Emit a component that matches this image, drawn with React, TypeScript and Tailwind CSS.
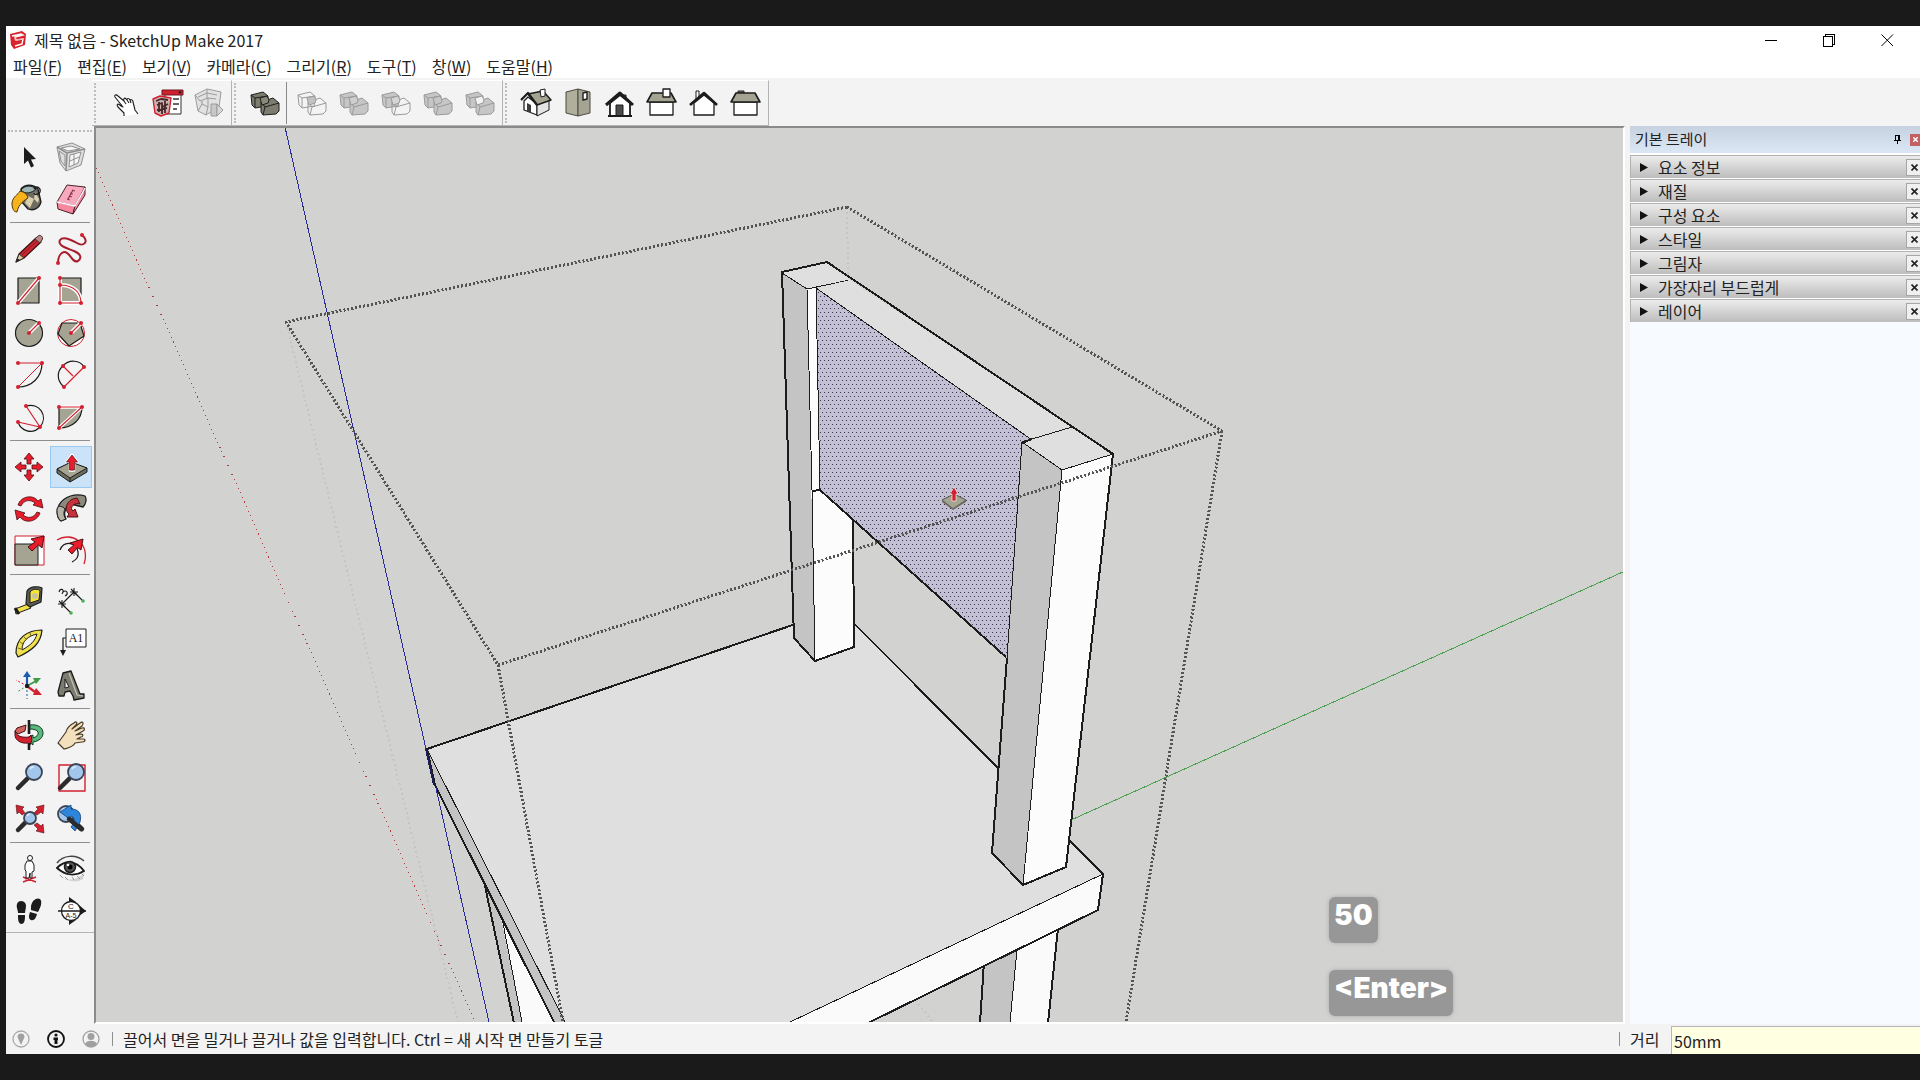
import { ReactNode, useState } from 'react'

const RED = '#d2202f'
const STONE = '#a5a492'
const INK = '#1c1c1c'

const menus = [
  { label: '파일', mnemonic: 'F' },
  { label: '편집', mnemonic: 'E' },
  { label: '보기', mnemonic: 'V' },
  { label: '카메라', mnemonic: 'C' },
  { label: '그리기', mnemonic: 'R' },
  { label: '도구', mnemonic: 'T' },
  { label: '창', mnemonic: 'W' },
  { label: '도움말', mnemonic: 'H' },
]

const trayPanels = ['요소 정보', '재질', '구성 요소', '스타일', '그림자', '가장자리 부드럽게', '레이어']

function Icon({ children }: { children: ReactNode }) {
  return (
    <svg width="32" height="32" viewBox="0 0 32 32" fill="none" strokeLinejoin="round" className="overflow-visible" aria-hidden="true">
      {children}
    </svg>
  )
}

function Dot({ x, y }: { x: number; y: number }) {
  return <circle cx={x} cy={y} r="2" fill={RED} />
}

function Lens({ x, y, r, hx, hy }: { x: number; y: number; r: number; hx: number; hy: number }) {
  const d = Math.hypot(hx - x, hy - y)
  const sx = x + ((hx - x) / d) * (r + 1)
  const sy = y + ((hy - y) / d) * (r + 1)
  return (
    <>
      <path d={`M${sx} ${sy}L${hx} ${hy}`} stroke="#2b2b2b" strokeWidth="4.5" strokeLinecap="round" />
      <circle cx={x} cy={y} r={r} fill="#a3c6ec" stroke="#3a4454" strokeWidth="1.8" />
      <path d={`M${x - r / 2} ${y - r / 3}a${r / 2} ${r / 2} 0 0 1 ${r / 2} -${r / 3}`} stroke="#dcebfa" strokeWidth="1.5" />
    </>
  )
}

// two overlapping blocks shared by the whole solid tools bar
function Solids({ a, b, mid, line }: { a: string; b: string; mid: string; line: string }) {
  return (
    <Icon>
      <g stroke={line} strokeWidth="1">
        <path d="M2 8L14 5L19 9V14L18 19L6 21L3 18Z" fill={a} />
        <path d="M2 8L6 11L19 9M6 11V21" />
        <path d="M12 15L24 11L30 16V24L27 27L14 28L12 25Z" fill={b} />
        <path d="M12 15L16 20L30 16M16 20L14 28" />
        <path d="M11 11L18 9L20 13L19 16L13 18Z" fill={mid} />
      </g>
    </Icon>
  )
}

const icons: Record<string, ReactNode> = {
  hand: (
    <Icon>
      <path d="M15 29L15 26L9 20C7 17 9 16 12 19L14 20L6 10C5 8 7 7 9 9L15 14C14 11 16 10 18 13C18 11 20 11 21 13C22 12 24 13 24 15L26 23L29 27M15 14L17 17M18 13L20 16M21 13L22 16" stroke={INK} strokeWidth="1.1" fill="#fff" />
    </Icon>
  ),
  layout: (
    <Icon>
      <path d="M14 5H30V27H14Z" fill="#fff" stroke="#333" />
      <path d="M11 3H32V8H11Z" fill="#d2202f" stroke="#6d1a20" />
      <path d="M27 4.500L31 4.500L29 7Z" fill={INK} />
      <path d="M22 12H28M22 17H28M22 22H26" stroke="#333" strokeWidth="1.5" />
      <path d="M2 12L9 9L20 11L18 26L10 29L4 26Z" fill="#c9b3b2" stroke={RED} strokeWidth="1.4" />
      <path d="M5 14L10 12L17 13M6 18L11 16V27M11 20L17 17M8 15V25M14 14V26M6 23L16 21" stroke="#4a2529" strokeWidth="1.8" />
    </Icon>
  ),
  styleBuilder: (
    <Icon>
      <g stroke="#9b9b9b">
        <path d="M2 8L14 2L28 5L26 20L13 28L5 24Z" fill="#e2e2e2" />
        <path d="M5 10L14 6L24 8M7 14L15 11L23 12M2 8L7 14M5 24L9 17L15 20L13 28M9 17V14M15 20V11M14 2V11" />
        <path d="M18 17H24V29H18Z" fill="#c8c8c8" />
        <path d="M24 17L30 23L24 29Z" fill="#d8d8d8" />
      </g>
    </Icon>
  ),
  outerShell: <Solids a="#7d7c6e" b="#7d7c6e" mid="#8a897a" line="#1f1f1f" />,
  intersect: <Solids a="none" b="none" mid="#c2c2c2" line="#9a9a9a" />,
  union: <Solids a="#c6c6c6" b="#c6c6c6" mid="#cfcfcf" line="#9a9a9a" />,
  subtract: <Solids a="#c6c6c6" b="none" mid="#d5d5d5" line="#9a9a9a" />,
  trim: <Solids a="#c6c6c6" b="#c6c6c6" mid="#c6c6c6" line="#9a9a9a" />,
  split: <Solids a="#c6c6c6" b="#c6c6c6" mid="#f3f3f3" line="#9a9a9a" />,
  iso: (
    <Icon>
      <path d="M4 14L8 10L17 17V28L4 23Z" fill="#fff" stroke={INK} strokeWidth="1.3" />
      <path d="M17 18L29 13V23L17 29Z" fill="#e4e4e4" stroke={INK} />
      <path d="M7 16L11 18V26L7 24Z" fill="#3c3c3c" />
      <path d="M8 7L23 4L31 13L17 18Z" fill={STONE} stroke={INK} strokeWidth="1.5" />
      <path d="M1 13L8 6L17 18" stroke={INK} strokeWidth="2.2" />
      <path d="M20 3L25 2V9L21 10Z" fill="#fff" stroke={INK} />
    </Icon>
  ),
  top: (
    <Icon>
      <path d="M4 5L16 2V29L4 26Z" fill="#b0af9b" stroke="#4b4b42" />
      <path d="M16 2L28 5V26L16 29Z" fill={STONE} stroke="#4b4b42" />
      <path d="M21 6L25 5V12L21 13Z" fill="#fff" stroke={INK} strokeWidth="1.4" />
    </Icon>
  ),
  front: (
    <Icon>
      <path d="M19 8H22V13H19Z" fill="#777" stroke={INK} />
      <path d="M6 16L16 8L26 16V29H6Z" fill="#fff" stroke={INK} strokeWidth="1.8" />
      <path d="M2 18L16 6L29 18" stroke={INK} strokeWidth="3" />
      <path d="M12 18H19V29H12Z" fill="#4a4a4a" stroke={INK} />
      <path d="M4 29H28" stroke={INK} strokeWidth="2" />
    </Icon>
  ),
  right: (
    <Icon>
      <path d="M4 15H27V28H4Z" fill="#fff" stroke={INK} strokeWidth="1.3" />
      <path d="M6 6H25L30 15H1Z" fill={STONE} stroke={INK} strokeWidth="1.6" />
      <path d="M17 2H24V10H17Z" fill="#fff" stroke={INK} strokeWidth="1.3" />
    </Icon>
  ),
  back: (
    <Icon>
      <path d="M8 4H11V12H8Z" fill="#fff" stroke={INK} />
      <path d="M6 16L16 8L26 16V28H6Z" fill="#fff" stroke={INK} strokeWidth="1.3" />
      <path d="M2 18L16 6L29 18" stroke={INK} strokeWidth="2.600" />
    </Icon>
  ),
  left: (
    <Icon>
      <path d="M8 4H14V6H8Z" fill="#888" stroke={INK} />
      <path d="M4 15H27V28H4Z" fill="#fff" stroke={INK} strokeWidth="1.3" />
      <path d="M6 6H25L30 15H1Z" fill={STONE} stroke={INK} strokeWidth="1.6" />
    </Icon>
  ),
  select: (
    <Icon>
      <path d="M11 6V23L15 19.500L18 26.500L21 25L18 18.500L23 18Z" fill={INK} />
    </Icon>
  ),
  component: (
    <Icon>
      <g stroke="#909090">
        <path d="M2 6L17 2L30 8L26 24L11 30L5 22Z" fill="#dedede" />
        <path d="M2 6L12 12L30 8M12 12L11 30" strokeWidth="1.6" />
        <path d="M6 7L16 5L25 8L13 10ZM15 14L26 11L23 22L14 26Z" fill="#f6f6f6" />
        <path d="M4 10L10 14V25L6 20ZM15 20L24 16M19 13V24" />
      </g>
    </Icon>
  ),
  paint: (
    <Icon>
      <path d="M8 6C12 1 20 1 25 6L28 19C26 26 20 28 15 26L8 18Z" fill="#6e6b60" stroke={INK} strokeWidth="1.3" />
      <path d="M8 7C12 2 19 2 23 6C19 10 12 12 8 7Z" fill="#9fb4b4" stroke={INK} />
      <path d="M15 13L21 16L17 25L12 20ZM22 9L26 16L25 20L21 16Z" fill="#d8cfae" />
      <path d="M7 8C5 12 0 13 -1 20C-1 26 1 29 4 29C5 24 8 19 15 15C14 10 10 9 7 8Z" fill="#f8b31c" stroke="#4d3a0a" />
      <path d="M21 6C24 2 28 5 27 9C26 12 21 12 21 10" stroke={INK} strokeWidth="1.3" />
    </Icon>
  ),
  eraser: (
    <Icon>
      <path d="M12 2L30 4L20 23L2 19Z" fill="#f9a9bd" stroke="#4a2029" />
      <path d="M2 19L20 23L18 31L3 26Z" fill="#f7889f" stroke="#4a2029" />
      <path d="M20 23L30 4V12L18 31Z" fill="#f58ba3" stroke="#4a2029" />
      <path d="M2 19L20 23L30 5" stroke="#fff" strokeWidth="1.3" />
      <path d="M12 16L15 17M14 13L17 14M15 10L18 11M17 7L20 8M13 16L18 7" stroke="#8a3b4c" strokeWidth="1.2" />
    </Icon>
  ),
  line: (
    <Icon>
      <path d="M3 29L6 21L23 5L28 9L11 25Z" fill="#c9252f" stroke="#3c1216" strokeWidth="1.2" />
      <path d="M3 29L6 21L11 25Z" fill="#d8c9a0" stroke="#333" />
      <path d="M3 29L4.500 25.500L7 27Z" fill={INK} />
      <path d="M22 6L25 3C27 1 31 4 29 7L27 10Z" fill="#b88" stroke="#433" />
      <path d="M9 22L24 8" stroke="#8c1820" />
    </Icon>
  ),
  freehand: (
    <Icon>
      <path d="M27 2C35 9 28 14 22 10C15 6 8 3 5 7C2 13 12 15 19 18C26 21 27 25 23 28C17 31 15 18 9 19C5 20 3 25 3 30" stroke="#a81d2a" strokeWidth="2" />
      <Dot x={27} y={2} /><Dot x={3} y={30} />
    </Icon>
  ),
  rectangle: (
    <Icon>
      <path d="M5 3H26V28H5Z" fill={STONE} stroke={INK} strokeWidth="1.2" />
      <path d="M5 28L26 3" stroke="#fff" strokeWidth="4" />
      <path d="M5 28L26 3" stroke={RED} strokeWidth="1.2" />
      <Dot x={5} y={28} /><Dot x={26} y={3} />
    </Icon>
  ),
  rotatedRectangle: (
    <Icon>
      <path d="M5 3H26V28H5Z" fill={STONE} stroke={INK} strokeWidth="1.2" />
      <path d="M5 10C18 10 26 17 26 28M5 3V28H26" stroke="#fff" strokeWidth="4" />
      <path d="M5 10C18 10 26 17 26 28M5 3V28H26" stroke={RED} strokeWidth="1.1" />
      <Dot x={5} y={3} /><Dot x={5} y={10} /><Dot x={5} y={28} /><Dot x={26} y={28} />
    </Icon>
  ),
  circle: (
    <Icon>
      <circle cx="16" cy="16" r="13.500" fill={STONE} stroke={INK} strokeWidth="1.2" />
      <path d="M16 16L26 6" stroke="#fff" strokeWidth="4" />
      <path d="M16 16L26 6" stroke={RED} strokeWidth="1.1" />
      <Dot x={16} y={16} /><Dot x={26} y={6} />
    </Icon>
  ),
  polygon: (
    <Icon>
      <circle cx="16" cy="16" r="13.500" fill="#fff" stroke={RED} />
      <path d="M7 6L25 6L29 19L14 29L3 17Z" fill={STONE} stroke={INK} strokeWidth="1.2" />
      <path d="M16 16L26 6" stroke="#fff" strokeWidth="4" />
      <path d="M16 16L26 6" stroke={RED} strokeWidth="1.1" />
      <Dot x={16} y={16} /><Dot x={26} y={6} />
    </Icon>
  ),
  arc: (
    <Icon>
      <path d="M29 4C29 18 19 28 5 28" stroke={INK} strokeWidth="1.2" />
      <path d="M5 4H29L5 28" stroke={RED} />
      <Dot x={5} y={4} /><Dot x={29} y={4} /><Dot x={5} y={28} />
    </Icon>
  ),
  twoPointArc: (
    <Icon>
      <path d="M9 28C1 21 2 12 8 7C14 0 25 1 29 8" stroke={INK} strokeWidth="1.2" />
      <path d="M8 7L18 17M29 8L9 28" stroke={RED} strokeWidth="1.2" />
      <Dot x={8} y={7} /><Dot x={29} y={8} /><Dot x={9} y={28} />
    </Icon>
  ),
  threePointArc: (
    <Icon>
      <path d="M13 5C26 1 36 15 27 26C19 34 8 30 5 21" stroke={INK} strokeWidth="1.2" />
      <path d="M13 5L27 26L5 21" stroke={RED} strokeWidth="1.2" />
      <Dot x={13} y={5} /><Dot x={27} y={26} /><Dot x={5} y={21} />
    </Icon>
  ),
  pie: (
    <Icon>
      <path d="M4 6H27C27 18 18 27 4 27Z" fill={STONE} stroke={INK} strokeWidth="1.2" />
      <path d="M4 6H27L4 27" stroke="#fff" strokeWidth="3.500" />
      <path d="M4 6H27L4 27" stroke={RED} strokeWidth="1.1" />
      <Dot x={4} y={6} /><Dot x={27} y={6} /><Dot x={4} y={27} />
    </Icon>
  ),
  move: (
    <Icon>
      <g fill="#e81c2b" stroke="#4d1014" strokeWidth=".8">
        <path d="M16 2L21 8H18V13H14V8H11Z" />
        <path d="M16 30L21 24H18V19H14V24H11Z" />
        <path d="M2 16L8 11V14H13V18H8V21Z" />
        <path d="M30 16L24 11V14H19V18H24V21Z" />
      </g>
    </Icon>
  ),
  pushPull: (
    <Icon>
      <path d="M2 18L15 12L32 17V21L15 31L2 22Z" fill="#6d6c5e" stroke={INK} />
      <path d="M2 18L16 11L32 17L15 27Z" fill={STONE} stroke={INK} />
      <path d="M15 27V31" stroke={INK} />
      <path d="M17 3L23 11H19.500V20H14.500V11H11Z" fill="#e81c2b" stroke="#fff" strokeWidth="1.4" />
      <path d="M17 4L22.500 11H19.500V19H14.500V11H11.500Z" fill="#e81c2b" stroke="#5d1418" strokeWidth=".7" />
    </Icon>
  ),
  rotate: (
    <Icon>
      <g fill="#e81c2b" stroke="#4d1014" strokeWidth=".8">
        <path d="M5 12C8 3 20 1 25 8L28 6L30 15L20 12L22 10C17 6 11 7 8 13Z" />
        <path d="M27 20C24 29 12 31 7 24L4 27L2 17L12 20L10 22C15 26 21 25 24 19Z" />
      </g>
    </Icon>
  ),
  followMe: (
    <Icon>
      <path d="M30 3C21 0 9 3 4 12C1 18 2 25 6 28L11 26C8 21 10 14 16 11L28 14C31 11 32 6 30 3Z" fill="#8b8a7d" stroke={INK} strokeWidth="1.3" />
      <path d="M2 16C3 12 8 13 10 16C8 20 9 24 11 26L6 28C2 25 2 20 2 16Z" fill="#b5b4a6" stroke={INK} />
      <path d="M22 5C12 6 8 16 14 21L12 24L23 24L20 16L18 18C14 15 19 9 25 11Z" fill="#c7333b" stroke="#4d1014" />
    </Icon>
  ),
  scale: (
    <Icon>
      <path d="M2 1H31V30H2Z" stroke={RED} fill="#fff" />
      <path d="M2 9H25V30H2Z" fill={STONE} stroke={INK} />
      <path d="M31 1L29 13L25.500 10L19 16L15 12L22 7L18 4Z" fill="#e81c2b" stroke="#4d1014" />
    </Icon>
  ),
  offset: (
    <Icon>
      <path d="M2 5C16 -4 36 8 29 29" stroke={RED} strokeWidth="1.3" />
      <path d="M5 15C9 5 22 7 23 17C24 22 21 25 17 27" stroke={INK} strokeWidth="1.3" />
      <path d="M28 4L26 15L22.500 12.500L17 19L13 15L19 10L15 8Z" fill="#e81c2b" stroke="#4d1014" />
    </Icon>
  ),
  tape: (
    <Icon>
      <path d="M2 24L15 19L18 23L5 28L3 29Z" fill="#f1e14a" stroke={INK} />
      <path d="M2 23L6 29" stroke={INK} strokeWidth="3" />
      <path d="M14 6C17 1 25 1 29 3L28 17L17 22L13 19Z" fill="#5c5b55" stroke={INK} strokeWidth="1.2" />
      <path d="M17 7C20 3 26 4 27 6L26 15L17 18Z" fill="#f4e436" stroke={INK} />
      <circle cx="22" cy="11" r="3" fill="#c9c4a0" />
    </Icon>
  ),
  dimension: (
    <Icon>
      <path d="M7 19L19 7M7 19L16 28M19 7L28 16" stroke={INK} strokeWidth="1.1" />
      <path d="M3 19H11M7 15V23M4 16L10 22M15 7H23M19 3V11M16 4L22 10" stroke={INK} strokeWidth="1.1" />
      <path d="M4 7C5 3 9 4 8 7C12 4 14 9 10 11M8 7L7 9" stroke={INK} strokeWidth="1.1" />
      <circle cx="16" cy="28" r="1.800" fill="#4fb052" /><circle cx="28" cy="16" r="1.800" fill="#4fb052" />
    </Icon>
  ),
  protractor: (
    <Icon>
      <path d="M3 26C3 11 14 3 29 3C28 16 20 23 5 30Z" fill="#efe04c" stroke={INK} strokeWidth="1.2" />
      <path d="M9 23C9 14 15 9 24 7C22 14 18 18 9 23Z" fill="#f4f4f4" stroke={INK} />
      <path d="M5 21L8 22M7 15L10 17M11 10L14 13M17 6L18 9" stroke="#6e6614" />
    </Icon>
  ),
  text: (
    <Icon>
      <path d="M11 2H31V20H11Z" fill="#fff" stroke={INK} />
      <text x="21" y="15" fontSize="12" textAnchor="middle" fill={INK} fontFamily="Liberation Serif, serif">A1</text>
      <path d="M11 11H8V24" stroke={INK} strokeWidth="1.2" />
      <path d="M5 23H11L8 29Z" fill={INK} />
    </Icon>
  ),
  axes: (
    <Icon>
      <path d="M14 17V7" stroke="#1f5bb0" strokeWidth="2.200" /><path d="M10 8L14 2L18 8Z" fill="#1f5bb0" />
      <path d="M14 17L23 12" stroke="#3f9a48" strokeWidth="2" /><path d="M20 9L28 9L23 15Z" fill="#3f9a48" />
      <path d="M14 17L22 23" stroke={RED} strokeWidth="2.200" /><path d="M23 19L29 26L20 26Z" fill={RED} />
      <path d="M14 17V30" stroke="#1f5bb0" strokeDasharray="2 2" />
      <path d="M14 17L4 23" stroke="#3f9a48" strokeDasharray="2 2" />
      <path d="M14 17L3 11" stroke={RED} strokeDasharray="2 2" />
      <circle cx="14" cy="17" r="2.200" fill={INK} />
    </Icon>
  ),
  text3d: (
    <Icon>
      <path d="M8 4L16 2L25 25L29 25V29L19 31L18 27L15 22L10 23L9 27L4 27L3 23Z" fill="#7d7c70" stroke={INK} strokeWidth="1.3" />
      <path d="M10 10L14 18L10 19Z" fill="#f3f3f3" stroke={INK} />
      <path d="M14 4L22 26L28 27" stroke="#c4c3b6" strokeWidth="1.2" />
    </Icon>
  ),
  orbit: (
    <Icon>
      <path d="M16 1V15" stroke={INK} strokeWidth="2.600" />
      <path d="M4 9L13 6L12 12L5 15L2 12Z" fill="#d0635f" stroke="#4d1014" />
      <path d="M17 6C24 5 30 8 30 14C30 19 26 22 20 23V26L13 20L20 16V19C23 18 26 16 25 13C24 11 21 10 17 10Z" fill="#59b97d" stroke="#123d22" />
      <path d="M2 12C3 17 9 19 16 18L18 16L19 21L17 26L15 24C8 25 2 21 2 16Z" fill="#d2202f" stroke="#4d1014" />
      <path d="M16 24V31" stroke={INK} strokeWidth="2.600" />
    </Icon>
  ),
  pan: (
    <Icon>
      <path d="M3 24L11 13C12 9 15 6 19 4C21 2 23 3 21 6L17 10L25 4C28 2 29 4 27 7L20 12L27 9C30 8 30 11 28 12L21 16L26 15C29 15 28 18 26 18L22 20L29 20C31 21 30 23 27 23L20 24C18 28 13 29 9 30Z" fill="#f4e0bd" stroke="#4a3c28" strokeWidth="1.2" />
    </Icon>
  ),
  zoom: <Icon><Lens x={21} y={11} r={8} hx={5} hy={27} /></Icon>,
  zoomWindow: (
    <Icon>
      <path d="M4 4H30V30H4Z" stroke={RED} strokeWidth="1.4" />
      <Lens x={21} y={11} r={8} hx={5} hy={27} />
    </Icon>
  ),
  zoomExtents: (
    <Icon>
      <g fill={RED} stroke="#4d1014" strokeWidth=".6">
        <path d="M3 2L11 4L9 6L12 10L9 12L6 9L4 11Z" />
        <path d="M31 2L23 4L25 6L21 10L24 12L28 9L30 11Z" />
        <path d="M31 30L23 28L25 26L21 22L24 20L28 23L30 21Z" />
      </g>
      <Lens x={17} y={15} r={6} hx={5} hy={27} />
    </Icon>
  ),
  previous: (
    <Icon>
      <Lens x={11} y={11} r={8} hx={27} hy={26} />
      <path d="M5 9L16 2V6C24 6 27 11 25 19L20 28L16 24C20 19 20 14 16 13V17Z" fill="#2e86dc" stroke="#173f70" strokeWidth=".8" />
      <path d="M14 16L26 26" stroke="#2b2b2b" strokeWidth="4.500" strokeLinecap="round" />
    </Icon>
  ),
  positionCamera: (
    <Icon>
      <path d="M10 29L23 24M10 24L23 29M12 26L16 23L20 26" stroke={RED} strokeWidth="1.4" />
      <circle cx="17" cy="5" r="2.500" fill="#fff" stroke={INK} />
      <path d="M14 8H19L21 12L21 18L19 19V25H17V20L16 25H13L13 18L12 17V12Z" fill="#fff" stroke={INK} />
    </Icon>
  ),
  lookAround: (
    <Icon>
      <path d="M3 21C7 27 20 30 29 20L28 26C22 30 10 29 3 21Z" fill="#d3d3d3" />
      <path d="M2 10C8 2 21 1 29 8" stroke="#444" strokeWidth="1.5" />
      <path d="M2 15C9 8 20 6 29 18C21 23 11 23 2 15Z" fill="#fff" stroke={INK} strokeWidth="2" />
      <circle cx="15" cy="14" r="5.500" fill="#555" stroke={INK} strokeWidth="1.500" />
      <circle cx="15" cy="14" r="2.500" fill="#000" /><circle cx="13" cy="12" r="1.300" fill="#fff" />
      <path d="M5 22L8 25M10 24L13 27M17 24L19 27M22 23L25 26M26 20L29 23" stroke="#999" />
    </Icon>
  ),
  walk: (
    <Icon>
      <path d="M4 9C5 5 12 5 13 10C13 14 12 16 12 18L5 18C5 14 3 13 4 9Z" fill={INK} />
      <path d="M5 20L12 20C12 24 12 29 8 29C5 28 5 24 5 20Z" fill={INK} />
      <path d="M18 11C19 5 24 2 27 4C30 7 27 13 25 17L18 15Z" fill={INK} />
      <path d="M17 17L24 19C23 23 21 26 18 25C15 24 16 20 17 17Z" fill={INK} />
    </Icon>
  ),
  section: (
    <Icon>
      <path d="M14 2L21 7L14 11ZM14 30L21 25L14 20ZM24 10L31 16L24 21Z" fill={INK} />
      <circle cx="16" cy="16" r="9.500" fill="#fff" stroke={INK} strokeWidth="1.3" />
      <path d="M3 16H31" stroke={INK} strokeWidth="1.5" />
      <text x="16" y="14" fontSize="8" textAnchor="middle" fill={INK} fontFamily="Liberation Sans, sans-serif">C</text>
      <text x="16" y="23" fontSize="7" textAnchor="middle" fill={INK} fontFamily="Liberation Sans, sans-serif">A-5</text>
    </Icon>
  ),
}

const topGroups = [
  [['hand', 'layout', 'styleBuilder']],
  [['outerShell'], ['intersect', 'union', 'subtract', 'trim', 'split']],
  [['iso', 'top', 'front', 'right', 'back', 'left']],
]

const sideGroups = [
  ['select', 'component', 'paint', 'eraser'],
  ['line', 'freehand', 'rectangle', 'rotatedRectangle', 'circle', 'polygon', 'arc', 'twoPointArc', 'threePointArc', 'pie'],
  ['move', 'pushPull', 'rotate', 'followMe', 'scale', 'offset'],
  ['tape', 'dimension', 'protractor', 'text', 'axes', 'text3d'],
  ['orbit', 'pan', 'zoom', 'zoomWindow', 'zoomExtents', 'previous'],
  ['positionCamera', 'lookAround', 'walk', 'section'],
]

function TitleBar() {
  return (
    <header className="flex h-7 shrink-0 items-center bg-white pl-1">
      <svg width="18" height="18" viewBox="0 0 18 18" aria-hidden="true">
        <path d="M0 3L12 0L16 3L15 14L4 18L1 14Z" fill="#d8232c" />
        <path d="M2 5L11 3L13 4L5 6L6 9L13 8L12 13L5 15" stroke="#fff" strokeWidth="1.4" fill="none" />
        <path d="M5 6V9L13 8" stroke="#f3a6a9" fill="none" />
      </svg>
      <h1 className="ml-[6px] text-base font-normal">제목 없음 - SketchUp Make 2017</h1>
      <div className="ml-auto flex pr-1">
        <button aria-label="최소화" className="flex h-7 w-[58px] items-center justify-center">
          <svg width="13" height="13" fill="none" stroke="#000" shapeRendering="crispEdges"><path d="M0 6.500H12" /></svg>
        </button>
        <button aria-label="이전 크기로 복원" className="flex h-7 w-[58px] items-center justify-center">
          <svg width="13" height="13" fill="none" stroke="#000" shapeRendering="crispEdges"><path d="M.5 2.500H9.500V12.500H.5ZM2.500 2.500V.5H11.500V10.500H9.500" /></svg>
        </button>
        <button aria-label="닫기" className="flex h-7 w-[58px] items-center justify-center">
          <svg width="13" height="13" fill="none" stroke="#000"><path d="M.5 .5L12 12M12 .5L.5 12" /></svg>
        </button>
      </div>
    </header>
  )
}

function TopToolbar() {
  return (
    <div className="flex h-12 shrink-0 bg-[#f3f3f3] pt-0.5 pl-[86px]">
      {topGroups.map((group, i) => (
        <div key={i} className="flex items-center border-t border-r border-b border-t-white border-r-[#b4b4b4] border-b-[#b4b4b4] pr-px pl-[2px]">
          <span className="mr-2 h-10 w-0 border-l-2 border-dotted border-[#bdbdbd]" />
          {group.map((names, j) => (
            <div key={j} className={j > 0 ? 'flex border-l border-[#8a8a8a] pl-1' : 'flex'}>
              {names.map((name) => (
                <button key={name} aria-label={name} className="flex h-[42px] w-[42px] items-center justify-center">{icons[name]}</button>
              ))}
            </div>
          ))}
        </div>
      ))}
    </div>
  )
}

function SideToolbar({ tool, onPick }: { tool: string; onPick: (name: string) => void }) {
  return (
    <aside className="w-[88px] shrink-0 bg-[#f3f3f3]">
      <div className="border-b border-[#b4b4b4] px-0.5 pt-1">
        <div className="mb-1 border-t-2 border-dotted border-[#bdbdbd]" />
        {sideGroups.map((group, i) => (
          <div key={i}>
            {i > 0 && <div className="mx-0.5 mt-0.5 mb-[5px] h-px bg-[#8f8f8f]" />}
            <div className="grid grid-cols-2">
              {group.map((name) => (
                <button key={name} aria-label={name} onClick={() => onPick(name)}
                  className={tool === name
                    ? 'flex h-[42px] items-center justify-center border border-[#99c9ef] bg-[#cbe3f8]'
                    : 'flex h-[42px] items-center justify-center'}>
                  {icons[name]}
                </button>
              ))}
            </div>
          </div>
        ))}
      </div>
    </aside>
  )
}

function Model() {
  return (
    <svg className="block h-full w-full" role="img" aria-label="모델">
      <defs>
        <pattern id="dots" width="4" height="8" patternUnits="userSpaceOnUse">
          <path d="M0 0H4V8H0Z" fill="#c3c0d4" />
          <path d="M0 0H1V1H0ZM2 4H3V5H2Z" fill="#3a3658" />
        </pattern>
      </defs>
      <g transform="translate(-96 -128)" shapeRendering="crispEdges" fill="none" strokeLinejoin="round">
        <g stroke="#c5c5c3" strokeWidth="2" strokeDasharray="2 3">
          <path d="M286 322L458 1022M847 207L848 276M915 1000L933 1022" />
        </g>
        <path d="M96 168L475 1022" stroke="#b23a3a" strokeDasharray="1 4" />
        <path d="M1071 820L1625 571" stroke="#4da04d" />

        {/* legs */}
        <path d="M485 886L513 1022H522L502 918Z" fill="#c4c4c4" />
        <path d="M501 918L522 1022H555Z" fill="#fafafa" />
        <path d="M984 960L980 1022H1010L1017 945Z" fill="#c4c4c4" />
        <path d="M1017 945L1010 1022H1048L1058 925Z" fill="#fafafa" />
        <path d="M502 918L522 1022M1017 950L1010 1022" stroke={INK} />
        <path d="M485 886L514 1023M984 962L980 1023M1058 928L1048 1023" stroke={INK} strokeWidth="2" />

        {/* seat */}
        <path d="M427 749L840 609L1103 874L790 1022H565Z" fill="#dfdfdf" />
        <path d="M427 749L435 785L554 1022H565Z" fill="#c4c4c4" />
        <path d="M1103 874L1098 910L869 1022H790Z" fill="#fafafa" />
        <path d="M427 749L565 1022M1103 874L790 1022" stroke={INK} />
        <path d="M435 785L427 749L840 609L1103 874L1098 910L868 1023M435 785L554 1022" stroke={INK} strokeWidth="2" />
        <path d="M285 127L426 749M436 788L489 1022" stroke="#2a2a9c" />
        <path d="M426 749L434 785" stroke="#1c1c58" strokeWidth="2" />

        {/* opening below the back panel */}
        <path d="M854 519V623L998 767L1007 658Z" fill="#d2d2d0" />

        {/* far post */}
        <path d="M782 273L807 289L815 661L794 638Z" fill="#c4c4c4" />
        <path d="M807 289L816 288L820 490L853 520L854 647L815 661Z" fill="#fcfcfc" />
        <path d="M782 273L827 262L850 280L807 289Z" fill="#dfdfdf" />
        <path d="M782 273L807 289L812 490L815 661M807 289L850 280" stroke={INK} />
        <path d="M827 262L782 272L794 638L815 661L854 647L853 520" stroke={INK} strokeWidth="2" />

        {/* back panel */}
        <path d="M816 288L850 280L1072 427L1032 440Z" fill="#dfdfdf" />
        <path d="M816 288L1032 440L1022 443L1007 658L820 490Z" fill="url(#dots)" />
        <path d="M820 490L816 288L1032 440" stroke={INK} />
        <path d="M812 491L820 490L1007 658" stroke={INK} strokeWidth="2" />

        {/* near post */}
        <path d="M1022 442L1072 427L1113 454L1062 470Z" fill="#dfdfdf" />
        <path d="M1022 442L1062 470L1023 885L992 853Z" fill="#c4c4c4" />
        <path d="M1062 470L1113 454L1066 867L1023 885Z" fill="#fcfcfc" />
        <path d="M1007 658L1022 442L1062 470L1023 885M1022 442L1072 427M1062 470L1113 454" stroke={INK} />
        <path d="M1007 658L992 853L1023 885L1066 867L1113 454L827 262M1022 443L1032 439" stroke={INK} strokeWidth="2" />

        {/* bounding box of the open group */}
        <path d="M847 207L286 322L498 665L1222 431L847 207" stroke="#555" strokeWidth="3" strokeDasharray="2 2" />
        <path d="M498 665L563 1022M1222 431L1126 1022" stroke="#555" strokeWidth="3" strokeDasharray="2 2" />
      </g>

      {/* push/pull cursor */}
      <g transform="translate(846 359)">
        <path d="M0 13L12 7L24 13L11 22Z" fill={STONE} stroke="#55544a" />
        <path d="M0 13V15L11 23L24 15V13L11 21Z" fill="#6d6c5e" />
        <path d="M12 0L16 7H14V14H10V7H8Z" fill="#d2202f" stroke="#fff" strokeWidth=".6" />
      </g>
    </svg>
  )
}

function Tray() {
  return (
    <aside className="flex min-w-0 flex-1 flex-col overflow-hidden bg-[#f7faff]">
      <div className="flex h-[27px] shrink-0 items-center bg-linear-to-b from-[#c7d2e1] to-[#dce7f6] pl-[5px]">
        <h2 className="text-[15px]">기본 트레이</h2>
        <button aria-label="고정" className="ml-auto">
          <svg width="8" height="9" fill="none" stroke="#000" shapeRendering="crispEdges"><path d="M1 .5H6M1.500 0V5M5.500 0V5M4.500 0V5M0 5.500H7M3.500 5V9" /></svg>
        </button>
        <button aria-label="트레이 닫기" className="ml-2 flex h-3 w-[10px] items-center justify-center bg-[#c45f62]">
          <svg width="5" height="5" stroke="#fff" strokeWidth="1.500"><path d="M0 0L5 5M5 0L0 5" /></svg>
        </button>
      </div>
      <div className="flex flex-col gap-px bg-white pt-0.5">
        {trayPanels.map((name) => (
          <section key={name} className="flex h-[23px] items-center border-t border-l border-[#b2b2b2] bg-linear-to-b from-[#ececec] to-[#bdbdbd] pl-[9px]">
            <button className="flex min-w-0 flex-1 items-center gap-[10px] text-base leading-5">
              <svg width="8" height="9" fill="#111" aria-hidden="true"><path d="M0 0L8 4.500L0 9Z" /></svg>
              {name}
            </button>
            <button aria-label={name + ' 닫기'} className="flex h-[17px] w-[14px] items-center border border-r-0 border-[#a6a6a6] bg-[#f0f0f0] pl-[4px]">
              <svg width="7" height="7" stroke="#222" strokeWidth="1.600"><path d="M.5 .5L6.500 6.500M6.500 .5L.5 6.500" /></svg>
            </button>
          </section>
        ))}
      </div>
    </aside>
  )
}

function StatusBar() {
  const [distance, setDistance] = useState('50mm')
  return (
    <footer className="flex h-[30px] shrink-0 items-center bg-[#f3f3f3] pl-1.5">
      <div className="flex gap-[17px]">
        <svg width="18" height="18" fill="none" aria-hidden="true">
          <circle cx="9" cy="9" r="8" stroke="#a9a9a9" strokeWidth="1.300" />
          <path d="M9 15L5.500 7A3.500 3.500 0 0 1 12.500 7Z" fill="#a0a0a0" />
        </svg>
        <svg width="18" height="18" fill="none" aria-hidden="true">
          <circle cx="9" cy="9" r="8" stroke="#111" strokeWidth="1.800" />
          <circle cx="9" cy="5" r="1.600" fill="#111" />
          <path d="M6.500 7.500H11V10H10.500V14H7.500V10H6.500Z" fill="#111" />
        </svg>
        <svg width="18" height="18" fill="none" aria-hidden="true">
          <circle cx="9" cy="9" r="8" stroke="#a0a0a0" strokeWidth="1.300" />
          <circle cx="9" cy="6.500" r="3.500" fill="#a0a0a0" />
          <path d="M3 14C4 9.500 14 9.500 15 14C12 18 6 18 3 14Z" fill="#a0a0a0" />
        </svg>
      </div>
      <p className="ml-3 flex items-center text-base">
        <span className="mr-[10px] h-[14px] w-px bg-[#8f8f8f]" />
        끌어서 면을 밀거나 끌거나 값을 입력합니다. Ctrl = 새 시작 면 만들기 토글
      </p>
      <div className="ml-auto flex w-[301px] items-center self-stretch">
        <span className="mr-[10px] h-[14px] w-px bg-[#8f8f8f]" />
        <label htmlFor="distance" className="w-[41px] text-base">거리</label>
        <input id="distance" value={distance} onChange={(e) => setDistance(e.target.value)}
          className="mt-0.5 min-w-0 flex-1 self-stretch border-t border-l border-[#b5b5c0] bg-[#ffffe1] pl-[2px] text-base outline-none" />
      </div>
    </footer>
  )
}

export default function App() {
  const [tool, setTool] = useState('pushPull')

  return (
    <div className="h-screen overflow-hidden bg-[#1a1a1a] py-[26px] pl-1.5 font-['Noto_Sans_CJK_KR',sans-serif] text-[#222]">
      <div className="flex h-full flex-col bg-[#f3f3f3]">
        <TitleBar />
        <nav className="flex h-6 shrink-0 items-center gap-[15px] bg-white pl-[7px] text-base leading-6">
          {menus.map((m) => (
            <button key={m.mnemonic}>{m.label}(<u className="underline-offset-2">{m.mnemonic}</u>)</button>
          ))}
        </nav>
        <TopToolbar />
        <div className="flex min-h-0 flex-1">
          <SideToolbar tool={tool} onPick={setTool} />
          <main className="relative w-[1531px] shrink-0 overflow-hidden border-t-2 border-r-2 border-b-2 border-l-2 border-t-[#8a8a8a] border-r-white border-b-white border-l-[#8a8a8a] bg-[#d2d2d0]">
            <Model />
            <div className="absolute right-[150px] bottom-[6px] flex w-[144px] flex-col items-start gap-[27px] font-['Inter',sans-serif] text-[28px] leading-9 font-black text-white">
              <kbd className="rounded-md bg-[#979797] px-[5px] pb-[10px] font-[inherit] shadow-[0_0_4px_#aaaaaa]">50</kbd>
              <kbd className="rounded-md bg-[#979797] px-[5px] pb-[10px] font-[inherit] shadow-[0_0_4px_#aaaaaa]">&lt;Enter&gt;</kbd>
            </div>
          </main>
          <div className="w-[5px] shrink-0" />
          <Tray />
        </div>
        <StatusBar />
      </div>
    </div>
  )
}
